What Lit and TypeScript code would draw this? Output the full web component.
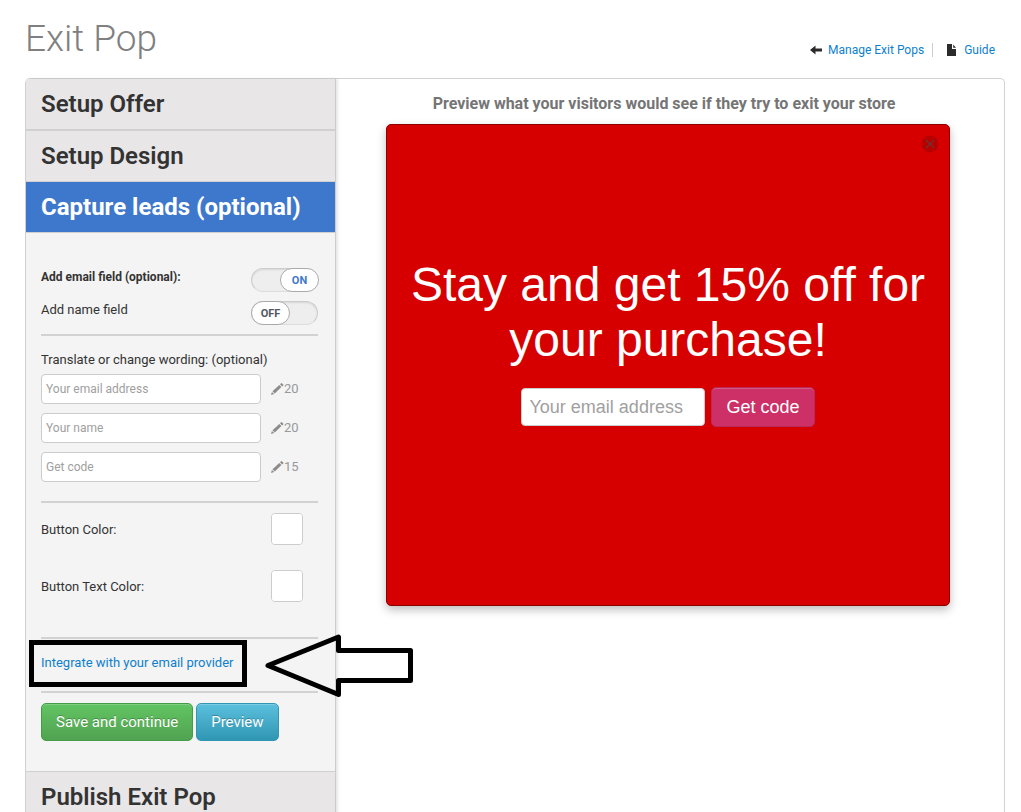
import { LitElement, html, css, svg } from "lit";
import { customElement, property, state } from "lit/decorators.js";
import { classMap } from "lit/directives/class-map.js";

const arrowIcon = svg`<path d="M0 6 5.5 1.500V4.600H12V7.600H5.500V10.500Z" fill="#2b2b2b"/>`;
const fileIcon = svg`<path d="M0 0H5V5H9V12H0ZM6.200 0.500 9 3.800H6.200Z" fill="#2b2b2b"/>`;
const pencilIcon = svg`<g fill="#8c8c8c"><path d="M0 12 0.900 8.900 3.200 11.100Z"/><path d="M1.500 8.200 8.300 1.900 10.400 4.100 3.800 10.500Z"/><path d="M9 1.300 10.100 0.300Q10.600-0.100 11.100 0.400L12.200 1.500Q12.700 2 12.200 2.500L11.100 3.500Z"/></g>`;

@customElement("toggle-switch")
export class ToggleSwitch extends LitElement {
  @property({ type: Boolean }) on = false;
  @property() label = "";
  @property({ type: Boolean }) strong = false;

  static styles = css`
    :host {
      display: block;
    }
    .row {
      display: flex;
      justify-content: space-between;
      align-items: flex-start;
      height: 33px;
      font-size: 13px;
      line-height: 18px;
      cursor: pointer;
    }
    .strong {
      font-size: 12px;
      font-weight: 700;
    }
    .track {
      position: relative;
      display: flex;
      box-sizing: border-box;
      width: 67px;
      height: 24px;
      border: 1px solid #ccc;
      border-bottom-color: #ddd;
      border-radius: 12px;
      background: #eee;
      box-shadow: inset 0 1px 2px rgba(0, 0, 0, 0.1);
    }
    .box {
      position: absolute;
      inset: 0;
      margin: 0;
      opacity: 0;
    }
    .knob {
      box-sizing: border-box;
      width: 39px;
      margin: -1px;
      border: 1px solid #aaa;
      border-radius: 12px;
      background: #fff;
      color: #505962;
      font-size: 11px;
      font-weight: 700;
      line-height: 23px;
      text-align: center;
    }
    .on .knob {
      margin-right: -2px;
      margin-left: auto;
      color: #3e78cc;
    }
  `;

  render() {
    return html`<label class="row">
      <span class=${classMap({ strong: this.strong })}>${this.label}</span>
      <span class=${classMap({ track: true, on: this.on })}>
        <input
          class="box"
          type="checkbox"
          .checked=${this.on}
          @change=${(e: Event) => (this.on = (e.target as HTMLInputElement).checked)}
        />
        <span class="knob">${this.on ? "ON" : "OFF"}</span>
      </span>
    </label>`;
  }
}

@customElement("app-root")
export class AppRoot extends LitElement {
  @state() private fields = [
    { text: "Your email address", left: 20 },
    { text: "Your name", left: 20 },
    { text: "Get code", left: 15 },
  ];

  static styles = css`
    :host {
      display: flex;
      flex-direction: column;
      box-sizing: border-box;
      height: 100vh;
      overflow: auto;
      scrollbar-width: none;
      padding: 0 16px 0 25px;
      background: #fff;
      color: #333;
      font-family: Roboto, sans-serif;
      font-size: 13px;
      line-height: 20px;
    }
    a {
      color: #0d7fcf;
      text-decoration: none;
    }
    button,
    input {
      font-family: inherit;
    }
    .top {
      display: flex;
      flex: none;
      justify-content: space-between;
      align-items: flex-start;
      height: 78px;
    }
    .title {
      margin: 19px 0 0;
      color: #808080;
      font-size: 37px;
      font-weight: 300;
      line-height: 40px;
    }
    .links {
      display: flex;
      margin-top: 43px;
      padding-right: 10px;
      font-size: 12px;
      line-height: 14px;
    }
    .link {
      display: flex;
      align-items: center;
      gap: 6px;
    }
    .link + .link {
      gap: 8px;
      margin-left: 8px;
      padding-left: 14px;
      border-left: 1px solid #ccc;
    }
    .panel {
      display: flex;
      flex: 1 0 auto;
      border: 1px solid #d2d2d2;
      border-bottom: 0;
      border-radius: 5px 5px 0 0;
    }
    .side {
      flex: none;
      width: 309px;
      border-right: 1px solid #ccc;
      border-radius: 4px 0 0 0;
      background: #f4f4f4;
      box-shadow: 2px 0 3px rgba(0, 0, 0, 0.1);
    }
    .head {
      margin: 0;
    }
    .head-button {
      display: block;
      box-sizing: border-box;
      width: 100%;
      height: 51px;
      padding: 0 15px;
      border: 0;
      border-bottom: 1px solid #d0d0d0;
      background: #e8e6e7;
      color: #333;
      font-size: 24px;
      font-weight: 600;
      line-height: 50px;
      text-align: left;
    }
    .head:first-child .head-button {
      height: 52px;
      border-bottom-width: 2px;
      border-radius: 4px 0 0 0;
    }
    .active .head-button {
      background: #3e78cc;
      color: #fff;
      font-weight: 700;
    }
    .last .head-button {
      border-top: 1px solid #d0d0d0;
    }
    .body {
      padding: 35px 17px 30px 15px;
    }
    .section {
      padding: 10px 0 18px;
      border-top: 2px solid #d2d2d2;
    }
    .wording {
      padding-bottom: 19px;
    }
    .caption {
      margin: 4px 0;
    }
    .field {
      display: flex;
      align-items: center;
      gap: 10px;
      margin-bottom: 9px;
      color: #999;
    }
    .field:last-child {
      margin-bottom: 0;
    }
    .field-input {
      box-sizing: border-box;
      width: 220px;
      height: 30px;
      padding: 0 4px;
      border: 1px solid #ccc;
      border-radius: 4px;
      background: #fff;
      font-size: 12px;
    }
    .field-input::placeholder,
    .mail::placeholder {
      color: #a0a0a0;
      opacity: 1;
    }
    .count {
      display: flex;
      align-items: center;
    }
    .color-row {
      display: flex;
      justify-content: space-between;
      align-items: center;
      height: 32px;
      padding-right: 15px;
    }
    .color-row + .color-row {
      margin-top: 25px;
    }
    .color-row label {
      line-height: 22px;
      padding-top: 2px;
    }
    .swatch {
      box-sizing: border-box;
      width: 32px;
      height: 32px;
      padding: 0;
      border: 1px solid #ccc;
      border-radius: 4px;
      background: #fff;
      appearance: none;
      overflow: hidden;
    }
    .swatch::-webkit-color-swatch-wrapper {
      padding: 0;
    }
    .swatch::-webkit-color-swatch {
      border: 0;
    }
    .colors {
      padding-bottom: 35px;
    }
    .provider {
      position: relative;
      padding: 14px 0 18px;
    }
    .frame {
      position: absolute;
      top: 1px;
      left: -12px;
      box-sizing: border-box;
      width: 218px;
      height: 47px;
      border: 5px solid #000;
      pointer-events: none;
    }
    .pointer {
      position: absolute;
      top: -6px;
      left: 223px;
      z-index: 1;
      pointer-events: none;
    }
    .actions {
      display: flex;
      gap: 3px;
      padding-bottom: 0;
    }
    .btn {
      height: 38px;
      padding: 0 14px;
      border: 1px solid #459c46;
      border-radius: 5px;
      background: linear-gradient(#62c462, #51a351);
      box-shadow: inset 0 1px 0 rgba(255, 255, 255, 0.2);
      color: #fff;
      font-size: 15px;
      text-shadow: 0 -1px 0 rgba(0, 0, 0, 0.25);
    }
    .info {
      border-color: #3096b4;
      background: linear-gradient(#5bc0de, #2f96b4);
    }
    .main {
      flex: 1;
      min-width: 0;
      padding: 15px 54px 24px 50px;
    }
    .note {
      margin: 0 0 10px;
      padding-right: 8px;
      color: #757575;
      font-size: 16px;
      font-weight: 700;
      line-height: 20px;
      text-align: center;
    }
    .popup {
      position: relative;
      display: flex;
      flex-direction: column;
      align-items: center;
      box-sizing: border-box;
      min-height: 482px;
      padding: 132px 20px 24px;
      border: 1px solid #8d0000;
      border-radius: 5px;
      background: #d60000;
      box-shadow: 0 4px 10px rgba(0, 0, 0, 0.25);
      font-family: "Liberation Sans", Arial, sans-serif;
    }
    .close {
      position: absolute;
      top: 10px;
      right: 10px;
      display: flex;
      padding: 0;
      border: 0;
      background: none;
    }
    .headline {
      margin: 0 0 20px;
      color: #fff;
      font-size: 48px;
      font-weight: 400;
      line-height: 55px;
      text-align: center;
    }
    .form {
      display: flex;
      align-items: center;
      gap: 6px;
    }
    .mail {
      box-sizing: border-box;
      width: 184px;
      height: 38px;
      padding: 0 7px;
      border: 1px solid #ccc;
      border-radius: 4px;
      background: #fff;
      font-size: 18px;
    }
    .code {
      height: 40px;
      border-color: #b82a5c;
      background: #cc3067;
      font-size: 18px;
      text-shadow: none;
    }
  `;

  private head(text: string, kind = "") {
    return html`<h2 class="head ${kind}">
      <button class="head-button" type="button">${text}</button>
    </h2>`;
  }

  render() {
    return html`
      <header class="top">
        <h1 class="title">Exit Pop</h1>
        <nav class="links">
          <span class="link">
            <svg width="12" height="12" viewBox="0 0 12 12">${arrowIcon}</svg>
            <a href="#manage">Manage Exit Pops</a>
          </span>
          <span class="link">
            <svg width="9" height="12" viewBox="0 0 9 12">${fileIcon}</svg>
            <a href="#guide">Guide</a>
          </span>
        </nav>
      </header>
      <div class="panel">
        <aside class="side">
          ${this.head("Setup Offer")} ${this.head("Setup Design")}
          ${this.head("Capture leads (optional)", "active")}
          <div class="body">
            <toggle-switch label="Add email field (optional):" strong on></toggle-switch>
            <toggle-switch label="Add name field"></toggle-switch>
            <div class="section wording">
              <p class="caption">Translate or change wording: (optional)</p>
              ${this.fields.map(
                (f) => html`<div class="field">
                  <input class="field-input" type="text" placeholder=${f.text} aria-label=${f.text} />
                  <span class="count">
                    <svg width="13" height="12" viewBox="0 0 13 12">${pencilIcon}</svg>${f.left}
                  </span>
                </div>`
              )}
            </div>
            <div class="section colors">
              <div class="color-row">
                <label for="bg">Button Color:</label>
                <input class="swatch" id="bg" type="color" value="#ffffff" />
              </div>
              <div class="color-row">
                <label for="fg">Button Text Color:</label>
                <input class="swatch" id="fg" type="color" value="#ffffff" />
              </div>
            </div>
            <div class="section provider">
              <a href="#provider">Integrate with your email provider</a>
              <span class="frame"></span>
              <svg class="pointer" width="150" height="66" viewBox="0 0 150 66">
                <path
                  d="M4 32.500 74.500 4V17.500H146.500V47.500H74.500V61.500Z"
                  fill="none"
                  stroke="#000"
                  stroke-width="5"
                  stroke-linejoin="round"
                />
              </svg>
            </div>
            <div class="section actions">
              <button class="btn" type="button">Save and continue</button>
              <button class="btn info" type="button">Preview</button>
            </div>
          </div>
          ${this.head("Publish Exit Pop", "last")}
        </aside>
        <main class="main">
          <p class="note">Preview what your visitors would see if they try to exit your store</p>
          <section class="popup">
            <button class="close" type="button" aria-label="Close">
              <svg width="18" height="18" viewBox="0 0 18 18">
                <circle cx="9" cy="9" r="8.500" fill="#b80000" />
                <path d="M5 5 13 13M13 5 5 13" stroke="#6b3434" stroke-width="1.300" />
              </svg>
            </button>
            <h2 class="headline">Stay and get 15% off for your purchase!</h2>
            <div class="form">
              <input class="mail" type="email" placeholder="Your email address" aria-label="Your email address" />
              <button class="btn code" type="button">Get code</button>
            </div>
          </section>
        </main>
      </div>
    `;
  }
}
